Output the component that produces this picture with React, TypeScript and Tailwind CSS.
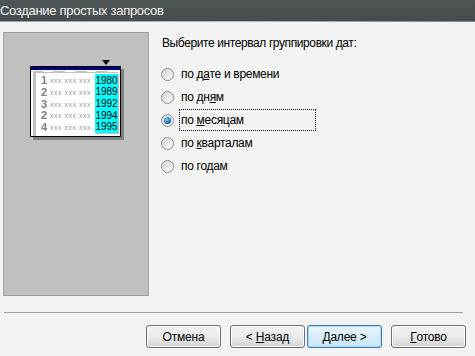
import type { ReactNode } from "react";

const rows = [
  { n: "1", y: "1980" },
  { n: "2", y: "1989" },
  { n: "3", y: "1992" },
  { n: "2", y: "1994" },
  { n: "4", y: "1995" },
];

const options: { pre: string; key: string; post: string; checked?: boolean }[] = [
  { pre: "по д", key: "а", post: "те и времени" },
  { pre: "по дн", key: "я", post: "м" },
  { pre: "по ", key: "м", post: "есяцам", checked: true },
  { pre: "по ", key: "к", post: "варталам" },
  { pre: "по го", key: "д", post: "ам" },
];

function Radio({ checked }: { checked?: boolean }) {
  return (
    <div className="w-[13px] h-[13px] rounded-full border border-[#8e8f8f] bg-gradient-to-br from-[#d4d4d4] to-[#fbfbfb] flex items-center justify-center shrink-0">
      {checked && (
        <div className="w-[7px] h-[7px] rounded-full bg-[radial-gradient(circle_at_40%_35%,#8fd1f7,#1a6db5_60%,#0c3f7a)]" />
      )}
    </div>
  );
}

function Button({ children, primary }: { children: ReactNode; primary?: boolean }) {
  return (
    <div
      className={
        "w-[75px] h-[23px] rounded-[3px] border flex items-center justify-center text-[12px] tracking-[-0.2px] text-black " +
        (primary
          ? "border-[#3c7fb1] bg-gradient-to-b from-[#eaf6fd] to-[#c9e6f8] shadow-[inset_0_0_0_1px_#a7d9f5]"
          : "border-[#707070] bg-gradient-to-b from-[#f2f2f2] via-[#ebebeb] to-[#d5d5d5] shadow-[inset_0_0_0_1px_#fcfcfc]")
      }
    >
      {children}
    </div>
  );
}

function Preview() {
  return (
    <div className="flex flex-col items-start">
      <div className="w-[90px] flex justify-end pr-[10px] h-[6px]">
        <div className="w-0 h-0 border-l-[4px] border-r-[4px] border-t-[5px] border-l-transparent border-r-transparent border-t-black" />
      </div>
      <div className="w-[91px] h-[71px] border border-black bg-white shadow-[3px_3px_0_#808080] flex flex-col">
        <div className="h-[3px] bg-[#000080]" />
        <div className="h-[3px] mx-[2px] mt-[1px] bg-[#c0c0c0] flex gap-[12px] pl-[10px]">
          <div className="w-[10px] h-[1px] bg-white" />
          <div className="w-[10px] h-[1px] bg-white" />
          <div className="w-[10px] h-[1px] bg-white" />
          <div className="w-[10px] h-[1px] bg-white" />
        </div>
        <div className="flex flex-1">
          <div className="w-[3px] ml-[2px] bg-[#c0c0c0]" />
          <div className="flex flex-col pt-[2px] pl-[5px]">
            {rows.map((r, i) => (
              <div key={i} className="h-[11.6px] flex items-center">
                <span className="w-[9px] text-[11px] font-bold text-[#808080] leading-none">{r.n}</span>
                <span className="w-[45px] text-[7px] tracking-[0.5px] text-[#9a9a9a] leading-none">xxx xxx xxx</span>
              </div>
            ))}
          </div>
          <div className="w-[23px] bg-[#00ffff] mt-[1px] mb-[3px] flex flex-col pt-[1px] shadow-[1px_1px_0_#c0c0c0]">
            {rows.map((r, i) => (
              <div key={i} className="h-[11.6px] flex items-center justify-center text-[10px] text-black leading-none">
                {r.y}
              </div>
            ))}
          </div>
        </div>
      </div>
    </div>
  );
}

export default function App() {
  return (
    <div className="w-[475px] h-[356px] bg-[#f3f3f3] flex flex-col overflow-hidden font-['Liberation_Sans',Arial,sans-serif]">
      <div className="h-[21px] bg-gradient-to-b from-[#4f5457] to-[#474b4e] flex items-center text-[13px] tracking-[-0.3px] text-[#f4f4f4] leading-none">
        Создание простых запросов
      </div>
      <div className="h-[1px] bg-gradient-to-r from-[#9aa0a3] via-[#b4b9bb] to-[#7f8588]" />
      <div className="flex pt-[10px] h-[274px]">
        <div className="ml-[3px] w-[146px] h-[264px] border border-[#a0a0a0] bg-[#c0c0c0] pt-[27px] pl-[26px]">
          <Preview />
        </div>
        <div className="flex flex-col ml-[13px] pt-[4px]">
          <div className="text-[12px] tracking-[-0.4px] text-black leading-[14px]">
            Выберите интервал группировки дат:
          </div>
          <div className="flex flex-col mt-[17px] ml-[-1px] gap-[9px]">
            {options.map((o, i) => (
              <div key={i} className="flex items-center h-[14px]">
                <Radio checked={o.checked} />
                <div
                  className={
                    "ml-[6px] pl-[1px] text-[12px] tracking-[-0.3px] leading-[14px] text-black " +
                    (o.checked ? "outline-dotted outline-1 outline-black w-[135px] py-[3px]" : "")
                  }
                >
                  {o.pre}
                  <span className="underline">{o.key}</span>
                  {o.post}
                </div>
              </div>
            ))}
          </div>
        </div>
      </div>
      <div className="mt-[16px] ml-[4px] w-[459px] h-[1px] bg-[#a0a0a0]" />
      <div className="flex mt-[12px] ml-[146px]">
        <Button>Отмена</Button>
        <div className="ml-[9px]">
          <Button>
            &lt;&nbsp;<span className="underline">Н</span>азад
          </Button>
        </div>
        <div className="ml-[2px]">
          <Button primary>
            <span className="underline">Д</span>алее&nbsp;&gt;
          </Button>
        </div>
        <div className="ml-[9px]">
          <Button>
            <span className="underline">Г</span>отово
          </Button>
        </div>
      </div>
    </div>
  );
}
